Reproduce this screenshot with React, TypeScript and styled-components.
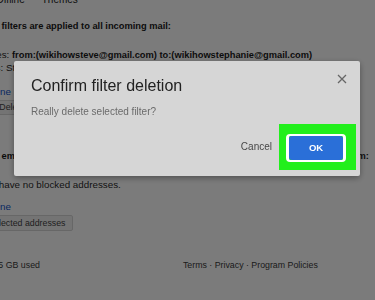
import React from "react";
import styled, { createGlobalStyle } from "styled-components";

const Global = createGlobalStyle`
  html, body {
    margin: 0;
    padding: 0;
    width: 375px;
    height: 300px;
    overflow: hidden;
    background: #ffffff;
    font-family: "Liberation Sans", Arial, sans-serif;
  }
`;

const Page = styled.div`
  display: flex;
  flex-direction: column;
  align-items: flex-start;
  margin-left: -61px;
  width: 560px;
  white-space: nowrap;
  color: #333;
`;

const Tabs = styled.div`
  display: flex;
  gap: 17px;
  margin-top: -6.5px;
  margin-left: -4.5px;
  height: 12px;
  line-height: 12px;
  font-size: 10px;
  color: #222;
`;

const Line = styled.div<{ $top: number; $indent?: number; $bold?: boolean }>`
  margin-top: ${(p) => p.$top}px;
  margin-left: ${(p) => p.$indent ?? 0}px;
  height: 13px;
  line-height: 13px;
  font-size: ${(p) => (p.$bold ? 9.3 : 9.8)}px;
  font-weight: ${(p) => (p.$bold ? 700 : 400)};
  color: ${(p) => (p.$bold ? "#1a1a1a" : "#2a2a2a")};
`;

const Strong = styled.span`
  font-size: 9.3px;
  font-weight: 700;
  color: #1a1a1a;
`;

const Link = styled.span`
  color: #1155cc;
`;

const ButtonRow = styled.div<{ $top: number; $indent?: number }>`
  display: flex;
  gap: 4px;
  margin-top: ${(p) => p.$top}px;
  margin-left: ${(p) => p.$indent ?? 0}px;
`;

const GreyButton = styled.div<{ $h: number }>`
  box-sizing: border-box;
  min-width: 46px;
  height: ${(p) => p.$h}px;
  line-height: ${(p) => p.$h - 2}px;
  padding: 0 6px;
  text-align: center;
  font-size: 8.8px;
  color: #444;
  background: #f1f1f1;
  border: 1px solid #d6d6d6;
  border-radius: 2px;
`;

const Footer = styled.div`
  display: flex;
  margin-top: 28px;
  margin-left: 1.2px;
  height: 13px;
  line-height: 13px;
  font-size: 8.8px;
  color: #3a3a3a;
`;

const Policies = styled.div`
  margin-left: 143px;
`;

const Scrim = styled.div`
  position: fixed;
  inset: 0;
  background: rgba(0, 0, 0, 0.518);
`;

const Dialog = styled.div`
  position: fixed;
  left: 14px;
  top: 61px;
  width: 346px;
  height: 115px;
  box-sizing: border-box;
  background: #d6d6d6;
  border-radius: 2px;
  box-shadow: 0 2px 6px rgba(0, 0, 0, 0.35);
  display: flex;
  flex-direction: column;
  font-family: "Liberation Sans", Arial, sans-serif;
`;

const Header = styled.div`
  display: flex;
  justify-content: space-between;
  align-items: flex-start;
  padding: 13px 13px 0 17px;
`;

const Title = styled.h2`
  margin: 2.4px 0 0;
  font-size: 16px;
  line-height: 20px;
  font-weight: 400;
  color: #222;
`;

const Close = styled.button`
  display: flex;
  width: 10px;
  height: 10px;
  padding: 0;
  border: 0;
  background: none;
`;

const Message = styled.p`
  margin: 8.8px 0 0 17px;
  font-size: 10px;
  line-height: 14px;
  color: #6b6b6b;
`;

const Actions = styled.div`
  display: flex;
  justify-content: flex-end;
  align-items: center;
  gap: 7px;
  margin-top: 4.8px;
  padding-right: 4px;
`;

const TextButton = styled.button`
  padding: 0;
  border: 0;
  background: none;
  font-family: inherit;
  font-size: 10px;
  line-height: 12px;
  color: #474747;
  margin-top: 1px;
`;

const Highlight = styled.div`
  display: flex;
  padding: 10px 10px 8px 7px;
  background: #22ef1c;
`;

const Ring = styled.div`
  display: flex;
  border-style: solid;
  border-color: #ffffff;
  border-width: 2px 3px;
  border-radius: 4px;
`;

const PrimaryButton = styled.button`
  width: 54px;
  height: 24px;
  padding: 0;
  border: 0;
  border-radius: 3px;
  background: #2a6fd8;
  color: #ffffff;
  font-family: inherit;
  font-size: 9.5px;
  font-weight: 700;
`;

export default function App() {
  return (
    <>
      <Global />
      <Page>
        <Tabs>
          <span>Advanced</span>
          <span>Offline</span>
          <span>Themes</span>
        </Tabs>
        <Line $top={14.7} $bold>
          The following filters are applied to all incoming mail:
        </Line>
        <Line $top={15.06} $indent={30.5}>
          Matches: <Strong>from:(wikihowsteve@gmail.com) to:(wikihowstephanie@gmail.com)</Strong>
        </Line>
        <Line $top={0} $indent={31}>
          Do this: Star it
        </Line>
        <Line $top={11}>
          Select: <Link>All</Link>, <Link>None</Link>
        </Line>
        <ButtonRow $top={1.74}>
          <GreyButton $h={15}>Export</GreyButton>
          <GreyButton $h={15}>Delete</GreyButton>
        </ButtonRow>
        <Line $top={35.4} $bold>
          The following email addresses are blocked. Messages from these addresses will appear in Spam:
        </Line>
        <Line $top={14.33} $indent={40.5}>
          You have no blocked addresses.
        </Line>
        <Line $top={9.5}>
          Select: <Link>All</Link>, <Link>None</Link>
        </Line>
        <ButtonRow $top={1.74} $indent={9.5}>
          <GreyButton $h={16}>Unblock selected addresses</GreyButton>
        </ButtonRow>
        <Footer>
          <span>0 GB (0%) of 15 GB used</span>
          <Policies>Terms · Privacy · Program Policies</Policies>
        </Footer>
      </Page>
      <Scrim />
      <Dialog role="dialog">
        <Header>
          <Title>Confirm filter deletion</Title>
          <Close aria-label="Close">
            <svg width="10" height="10" viewBox="0 0 10 10">
              <path d="M1 1L9 9M9 1L1 9" stroke="#666" strokeWidth="1.3" fill="none" />
            </svg>
          </Close>
        </Header>
        <Message>Really delete selected filter?</Message>
        <Actions>
          <TextButton>Cancel</TextButton>
          <Highlight>
            <Ring>
              <PrimaryButton>OK</PrimaryButton>
            </Ring>
          </Highlight>
        </Actions>
      </Dialog>
    </>
  );
}
